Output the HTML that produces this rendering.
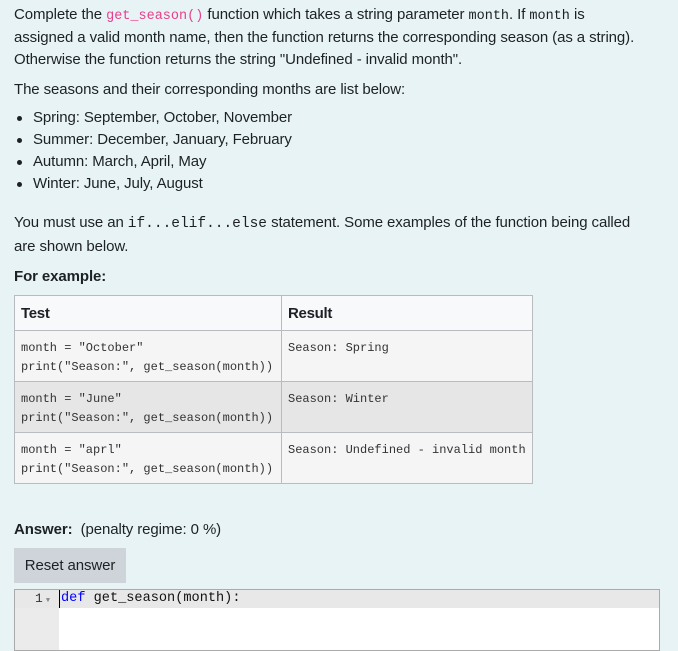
<!DOCTYPE html>
<html><head><style>
body{margin:0;width:678px;height:644px;background:#e7f3f5;font-family:"Liberation Sans",sans-serif;font-size:15px;color:#1d2125;overflow:hidden;position:relative;letter-spacing:-0.1px}
.t{position:absolute;left:14px;white-space:nowrap;line-height:20px}
code{font-family:"Liberation Mono",monospace;font-size:13.5px;letter-spacing:0}
.pk{color:#e83e8c}
.b{position:absolute;left:17px;white-space:nowrap;line-height:20px}
.b:before{content:"";position:absolute;left:0;top:8px;width:5px;height:5px;border-radius:50%;background:#1d2125}
.b span{margin-left:16px}
table{position:absolute;left:14px;top:295px;border-collapse:collapse;width:519px}
td,th{border:1px solid #b8bcc0;text-align:left;vertical-align:top;padding:0 6px}
th{height:34px;background:#f8f9fb;font-weight:bold;vertical-align:middle;letter-spacing:-0.3px}
td{font-family:"Liberation Mono",monospace;font-size:12px;line-height:19px;padding-top:8px;height:42px;letter-spacing:0;color:#333;background:#f5f5f5}
tr.g td{background:#e6e6e6}
</style></head><body>
<div class="t" style="top:5px">Complete the <code class="pk">get_season()</code> function which takes a string parameter <code>month</code>. If <code>month</code> is</div>
<div class="t" style="top:28px">assigned a valid month name, then the function returns the corresponding season (as a string).</div>
<div class="t" style="top:50px">Otherwise the function returns the string "Undefined - invalid month".</div>
<div class="t" style="top:80px">The seasons and their corresponding months are list below:</div>
<div class="b" style="top:108px"><span>Spring: September, October, November</span></div>
<div class="b" style="top:130px"><span>Summer: December, January, February</span></div>
<div class="b" style="top:152px"><span>Autumn: March, April, May</span></div>
<div class="b" style="top:174px"><span>Winter: June, July, August</span></div>
<div class="t" style="top:213px">You must use an <code style="font-size:14.5px">if...elif...else</code> statement. Some examples of the function being called</div>
<div class="t" style="top:237px">are shown below.</div>
<div class="t" style="top:267px;font-weight:bold">For example:</div>
<table>
<tr><th style="width:254px">Test</th><th>Result</th></tr>
<tr><td>month = "October"<br>print("Season:", get_season(month))</td><td>Season: Spring</td></tr>
<tr class="g"><td>month = "June"<br>print("Season:", get_season(month))</td><td>Season: Winter</td></tr>
<tr><td>month = "aprl"<br>print("Season:", get_season(month))</td><td>Season: Undefined - invalid month</td></tr>
</table>
<div class="t" style="top:520px"><b>Answer:</b>&nbsp; (penalty regime: 0 %)</div>
<div style="position:absolute;left:14px;top:548px;width:112px;height:35px;background:#ced4da;line-height:35px;text-align:center;color:#1d2125">Reset answer</div>
<div style="position:absolute;left:14px;top:589px;width:644px;height:60px;border:1px solid #aaa;background:#fff">
 <div style="position:absolute;left:0;top:0;width:44px;height:60px;background:#ebebeb"></div>
 <div style="position:absolute;left:0;top:0;width:644px;height:18px;background:#e8e8e8"></div>
 <div style="position:absolute;left:20px;top:0;font-family:'Liberation Mono',monospace;font-size:13px;line-height:18px;color:#333;letter-spacing:0">1<span style="font-size:7px;color:#888;margin-left:3px">▼</span></div>
 <div style="position:absolute;left:44px;top:0;width:1px;height:18px;background:#000"></div>
 <div style="position:absolute;left:46px;top:0;font-family:'Liberation Mono',monospace;font-size:13.6px;line-height:18px;letter-spacing:0;color:#111"><span style="color:#00f">def</span> get_season(month):</div>
</div>
</body></html>
